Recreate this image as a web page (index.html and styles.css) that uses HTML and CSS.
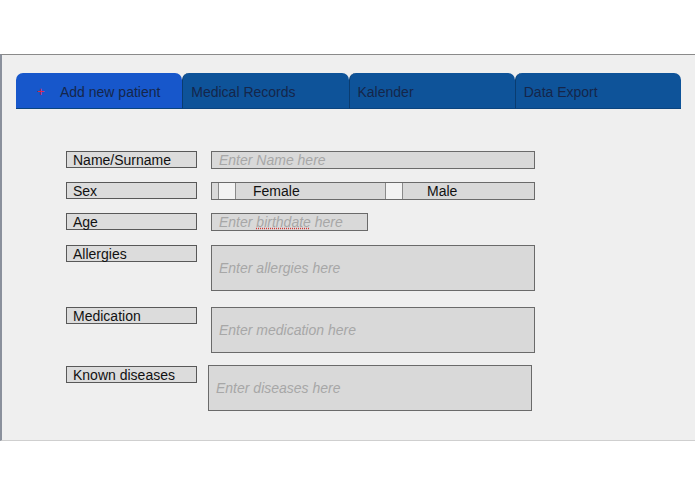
FILE: index.html
```html
<!DOCTYPE html>
<html lang="en">
<head>
    <meta charset="UTF-8">
    <meta name="viewport" content="width=device-width, initial-scale=1.0">
    <title>Add new patient</title>
    <link rel="stylesheet" href="styles.css">
</head>
<body>
<div class="panel">
    <div class="tabs">
        <div class="tab active"><span class="tab-plus">+</span>Add new patient</div>
        <div class="tab">Medical Records</div>
        <div class="tab">Kalender</div>
        <div class="tab">Data Export</div>
    </div>

    <div class="form">
        <div class="row">
            <div class="label">Name/Surname</div>
            <div class="field wide"><span class="hint">Enter Name here</span></div>
        </div>
        <div class="row">
            <div class="label">Sex</div>
            <div class="field wide sex">
                <span class="check"></span>
                <span class="option female">Female</span>
                <span class="check"></span>
                <span class="option male">Male</span>
            </div>
        </div>
        <div class="row">
            <div class="label">Age</div>
            <div class="field short"><span class="hint">Enter <span class="typo">birthdate</span> here</span></div>
        </div>
        <div class="row row-allergies">
            <div class="label">Allergies</div>
            <div class="field wide tall"><span class="hint">Enter allergies here</span></div>
        </div>
        <div class="row row-medication">
            <div class="label">Medication</div>
            <div class="field wide tall"><span class="hint">Enter medication here</span></div>
        </div>
        <div class="row row-diseases">
            <div class="label">Known diseases</div>
            <div class="field wide tall shifted"><span class="hint">Enter diseases here</span></div>
        </div>
    </div>
</div>
</body>
</html>
```

FILE: styles.css
```css
body {
    margin: 0;
    padding: 0;
    background: #fff;
    font-family: 'Liberation Sans', Arial, sans-serif;
    font-size: 14px;
    color: #111;
}

.panel {
    margin-top: 54px;
    height: 387px;
    background: #efefef;
    border-top: 1px solid #8a8a8a;
    border-left: 2px solid #8a909c;
    border-bottom: 1px solid #cfcfcf;
    padding: 18px 14px 0 14px;
    box-sizing: border-box;
}

.tabs {
    display: grid;
    grid-template-columns: repeat(4, 1fr);
    height: 36px;
}

.tab {
    display: flex;
    align-items: center;
    padding: 2px 0 0 8px;
    background: #0e5399;
    color: #15264a;
    border-radius: 7px 7px 0 0;
    border-left: 1px solid #0a3c70;
    border-bottom: 1px solid #0b447e;
    box-sizing: border-box;
}

.tab:first-child {
    border-left: none;
}

.tab.active {
    background: #1757cb;
    padding-left: 21px;
}

.tab-plus {
    color: #e0284a;
    font-size: 13px;
    width: 23px;
}

.form {
    display: flex;
    flex-direction: column;
    gap: 13px;
    margin: 42px 0 0 50px;
}

.row {
    display: flex;
    align-items: flex-start;
    gap: 14px;
}

.row-allergies {
    margin-top: 1px;
}

.row-medication {
    margin-top: 3px;
}

.row-diseases {
    margin-top: -1px;
}

.label {
    width: 131px;
    height: 17px;
    line-height: 17px;
    padding-left: 6px;
    background: #dcdcdc;
    border: 1px solid #585858;
    box-sizing: border-box;
}

.row-diseases .label {
    margin-top: 1px;
}

.field {
    height: 18px;
    display: flex;
    align-items: center;
    padding-left: 7px;
    background: #d9d9d9;
    border: 1px solid #6a6a6a;
    box-sizing: border-box;
}

.field.wide {
    width: 324px;
}

.field.short {
    width: 157px;
}

.field.tall {
    height: 46px;
}

.field.shifted {
    margin-left: -3px;
}

.hint {
    font-style: italic;
    color: #a7a7a7;
}

.typo {
    text-decoration: underline dotted #d43a3a;
}

.field.sex {
    padding-left: 6px;
    align-items: stretch;
}

.check {
    width: 18px;
    background: #f3f3f3;
    border-left: 1px solid #8a8a8a;
    border-right: 1px solid #8a8a8a;
    box-sizing: border-box;
}

.option {
    display: flex;
    align-items: center;
}

.option.female {
    width: 149px;
    padding-left: 17px;
    box-sizing: border-box;
}

.option.male {
    padding-left: 24px;
}
```
